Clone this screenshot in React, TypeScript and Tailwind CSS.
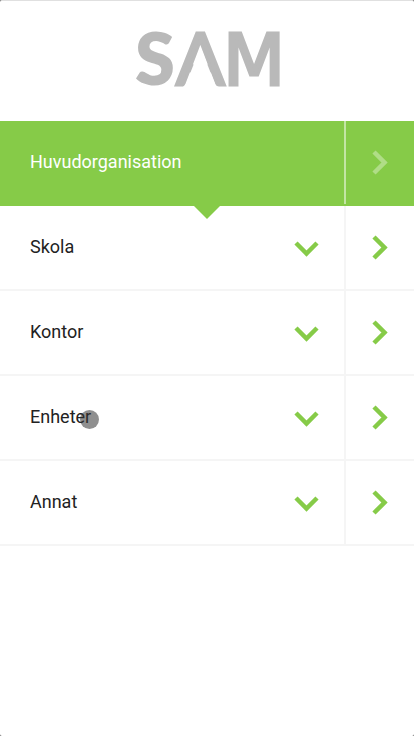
import React, { useState } from 'react';

interface MenuItem {
    id: string;
    label: string;
}

const items: MenuItem[] = [
    { id: 'skola', label: 'Skola' },
    { id: 'kontor', label: 'Kontor' },
    { id: 'enheter', label: 'Enheter' },
    { id: 'annat', label: 'Annat' },
];

const Logo: React.FC = () => (
    <svg
        width="144"
        height="60"
        viewBox="0 0 144 60"
        role="img"
        aria-label="SAM"
        fill="#b9b9b9"
        stroke="#b9b9b9"
        strokeWidth="0"
        className="overflow-visible"
    >
        <text y="54" fontSize="72" className="font-['Lato',sans-serif]">
            <tspan x="0" className="font-extrabold">
                S
            </tspan>
            <tspan x="41" strokeWidth="3" className="font-normal">
                A
            </tspan>
            <tspan x="88" strokeWidth="3" className="font-['DejaVu_Sans',sans-serif] font-normal">
                M
            </tspan>
        </text>
        {/* Opens up the A so it has no crossbar */}
        <path d="M65.5 16L82 58H49Z" fill="#fff" />
    </svg>
);

const ChevronRight: React.FC = () => (
    <svg width="16" height="25" viewBox="0 0 16 25" fill="none" stroke="currentColor" strokeWidth="4.5" aria-hidden="true">
        <path d="M2 2L12.5 12.5L2 23" />
    </svg>
);

const ChevronDown: React.FC = () => (
    <svg width="25" height="16" viewBox="0 0 25 16" fill="none" stroke="currentColor" strokeWidth="4.5" aria-hidden="true">
        <path d="M2 2L12.5 12.5L23 2" />
    </svg>
);

const MenuRow: React.FC<{ item: MenuItem; touched: boolean; onTouch: () => void }> = ({ item, touched, onTouch }) => (
    <li className="relative flex h-[85px] border-b-2 border-[#f5f5f5]">
        <button
            type="button"
            onClick={onTouch}
            className="flex flex-1 items-center justify-between pl-[30px] pr-[25px] text-left text-[#222]"
        >
            <span className="pb-0.5">{item.label}</span>
            <span className="pt-0.5 text-[#86cb48]">
                <ChevronDown />
            </span>
        </button>
        <a
            href={`#${item.id}`}
            aria-label={`Visa ${item.label}`}
            className="flex w-[70px] items-center justify-center border-l-2 border-[#f5f5f5] text-[#86cb48]"
        >
            <ChevronRight />
        </a>
        {/* Touch indicator */}
        {touched && (
            <span className="pointer-events-none absolute left-20 top-[34px] size-[19px] rounded-full bg-[#333]/55" />
        )}
    </li>
);

export default function App() {
    const [touchedId, setTouchedId] = useState('enheter');

    return (
        <div className="min-h-screen bg-[#666] font-['Roboto',sans-serif] text-lg">
            <div className="min-h-screen rounded-[2px] border-t border-[#e0e0e0] bg-white">
                <header className="flex h-[120px] items-center justify-center">
                    <Logo />
                </header>

                <nav aria-label="Huvudmeny">
                    <div className="relative flex h-[85px] border-b-2 border-[#86cb48] bg-[#86cb48] text-white">
                        <h1 className="flex flex-1 items-center pb-0.5 pl-[30px]">Huvudorganisation</h1>
                        <a
                            href="#huvudorganisation"
                            aria-label="Visa Huvudorganisation"
                            className="flex w-[70px] items-center justify-center border-l-2 border-white/50 text-white/35"
                        >
                            <ChevronRight />
                        </a>
                        <svg
                            width="26"
                            height="13"
                            viewBox="0 0 26 13"
                            className="absolute left-1/2 top-full z-10 mt-0.5 -translate-x-1/2"
                            aria-hidden="true"
                        >
                            <path d="M0 0H26L13 13Z" fill="#86cb48" />
                        </svg>
                    </div>

                    <ul>
                        {items.map((item) => (
                            <MenuRow
                                key={item.id}
                                item={item}
                                touched={touchedId === item.id}
                                onTouch={() => setTouchedId(item.id)}
                            />
                        ))}
                    </ul>
                </nav>
            </div>
        </div>
    );
}
